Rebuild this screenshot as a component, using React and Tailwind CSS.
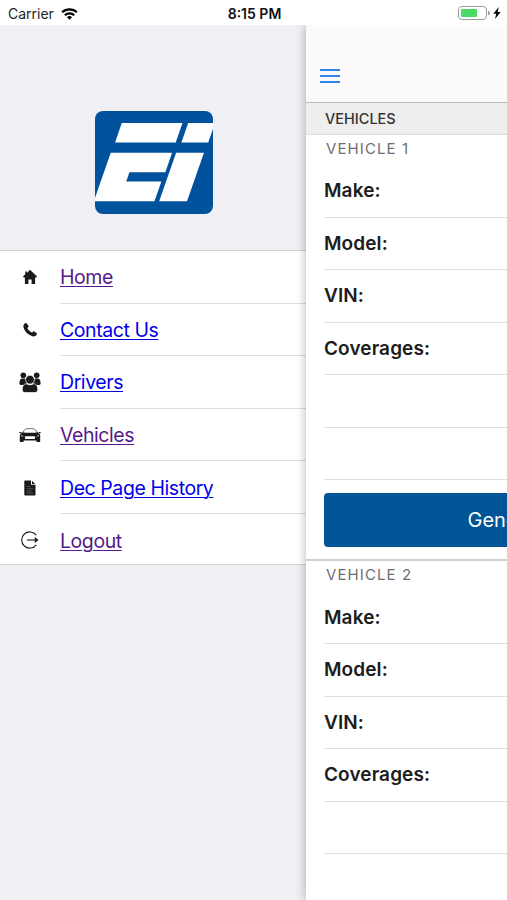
import React from "react";

const HomeIcon = () => (
  <svg viewBox="0 0 16 16" className="w-[16px] h-[16px]" fill="currentColor">
    <path d="M8 .8 15 7.600l-.8 1h-1.100V15H9.600v-4.400H6.400V15H2.900V8.600H1.800L1 7.600 3.300 5.300V2.400h1.600v1.500z" />
  </svg>
);

const PhoneIcon = () => (
  <svg viewBox="0 0 16 16" className="w-[16px] h-[16px]" fill="currentColor">
    <path d="M3.300 1.300c.6-.4 1.100-.2 1.500.3l1.600 2.200c.4.600.3 1.100-.2 1.500l-.9.700c.9 2 2.700 3.800 4.800 4.700l.7-.9c.4-.5.900-.6 1.500-.2l2.200 1.500c.5.400.6.900.3 1.400-.8 1.400-2 2.100-3.700 1.900C6.500 13.500 2.200 9.300 1.400 4.800 1.200 3.200 2 2 3.300 1.300z" />
  </svg>
);

const DriversIcon = () => (
  <svg viewBox="0 0 22 21" className="w-[22px] h-[21px]" fill="currentColor">
    <circle cx="4.300" cy="3.300" r="2.800" />
    <circle cx="17.700" cy="3.300" r="2.800" />
    <path d="M2.500 6.400h3.800l1.700 5.300-2.800 1.300H2c-1.200 0-1.700-.7-1.600-1.900.1-2 .7-4.200 2.100-4.700z" />
    <path d="M19.500 6.400h-3.800L14 11.700l2.800 1.300H20c1.200 0 1.700-.7 1.600-1.900-.1-2-.7-4.200-2.100-4.700z" />
    <path
      d="M7.300 11.700c2.200 1.500 5.200 1.500 7.400 0 2.600.3 4 2.400 4.100 5.300.1 2.300-.9 3.500-2.700 3.500H5.900c-1.800 0-2.800-1.200-2.700-3.500.1-2.900 1.500-5 4.100-5.300z"
      stroke="#fff"
      strokeWidth=".7"
    />
    <circle cx="11" cy="7.700" r="4.400" stroke="#fff" strokeWidth=".7" />
  </svg>
);

const CarIcon = () => (
  <svg viewBox="0 0 22 16" className="w-[22px] h-[16px]" fill="currentColor">
    <path d="M3.500 6.200 5.500 2.900Q6 2 7.200 1.800Q11 1.200 14.800 1.800Q16 2 16.500 2.900L18.500 6.200" fill="none" stroke="#666" strokeWidth=".9" />
    <path
      fillRule="evenodd"
      d="M3.500 5.300C6 6 16 6 18.500 5.300l1.800 1.500c.7.600.9 1.300.9 2.200v5.200c0 .6-.3.900-.9.900h-2c-.6 0-.9-.3-.9-.9v-.6H4.600v.6c0 .6-.3.900-.9.900h-2c-.6 0-.9-.3-.9-.9V9c0-.9.200-1.600.9-2.200zM6.500 9.300c-.5 0-.7.300-.7.700l.3 1.500c.1.400.4.600.8.600h8.200c.4 0 .7-.2.800-.6l.3-1.500c0-.4-.2-.7-.7-.7zM2 8.300l.2.900 2.200.3c-.2-.7-1-1.100-2.400-1.200zM20 8.300l-.2.900-2.200.3c.2-.7 1-1.100 2.400-1.200z"
    />
    <path d="M.4 5h2v1.200h-2zM19.600 5h2v1.200h-2z" />
  </svg>
);

const DocumentIcon = () => (
  <svg viewBox="0 0 12 16" className="w-[12px] h-[16px]" fill="currentColor">
    <path d="M1 .5h6v4.300h4.500V14.500c0 .6-.4 1-1 1H1.200c-.6 0-.9-.4-.9-1V1.300c0-.5.300-.8.700-.8z" />
    <path d="M8 .8 11.200 4H8z" />
    <path d="M2.500 6.500h4M2.500 8.700h6.500M2.500 10.900h5M2.500 13h6.500" stroke="#777" strokeWidth=".6" />
  </svg>
);

const LogoutIcon = () => (
  <svg viewBox="0 0 20 20" className="w-[20px] h-[20px]" fill="none" stroke="currentColor" strokeWidth="1.100">
    <path d="M16.300 5.200a8.100 8.100 0 1 0 0 9.600" />
    <path d="M7 10h9.500" />
    <path d="M14.800 6.900 18.600 10l-3.800 3.100z" fill="currentColor" stroke="none" />
  </svg>
);

const menuItems = [
  { title: "Home", icon: <HomeIcon />, color: "text-[#551a8b]" },
  { title: "Contact Us", icon: <PhoneIcon />, color: "text-[#0000ee]" },
  { title: "Drivers", icon: <DriversIcon />, color: "text-[#0000ee]" },
  { title: "Vehicles", icon: <CarIcon />, color: "text-[#551a8b]" },
  { title: "Dec Page History", icon: <DocumentIcon />, color: "text-[#0000ee]" },
  { title: "Logout", icon: <LogoutIcon />, color: "text-[#551a8b]" },
];

const vehicles = ["Vehicle 1", "Vehicle 2"];
const fields = ["Make:", "Model:", "VIN:", "Coverages:", "", ""];

const StatusBar = () => (
  <header className="h-[25px] shrink-0 grid grid-cols-[1fr_auto_1fr] items-center bg-white pl-2 pr-[6px] pt-[2px] text-black">
    <div className="flex items-center gap-[7px]">
      <span className="text-[14px] text-[#222]">Carrier</span>
      <svg viewBox="0 0 18 13" className="w-[17px] h-[12px]" fill="none" stroke="currentColor" strokeWidth="2.300">
        <path d="M1 4.700a11.500 11.500 0 0 1 16 0" />
        <path d="M3.900 7.900a7.300 7.300 0 0 1 10.200 0" />
        <path d="M9 12.800 6.300 10a3.900 3.900 0 0 1 5.400 0z" fill="currentColor" stroke="none" />
      </svg>
    </div>
    <span className="text-[14px] font-semibold text-[#111]">8:15 PM</span>
    <div className="flex items-center justify-end pb-px">
      <div className="w-[29px] h-[14px] rounded-[4px] border border-[#9b9b9b] p-[2px]">
        <div className="w-[16px] h-full rounded-[1px] bg-[#4cd964]"></div>
      </div>
      <div className="w-[2px] h-[4px] ml-px rounded-r bg-[#9b9b9b]"></div>
      <svg viewBox="0 0 8 12" className="w-[8px] h-[12px] ml-[3px]" fill="currentColor">
        <path d="M5.800 0 .3 6.800h3L2 12l5.700-7H4.600z" />
      </svg>
    </div>
  </header>
);

const Logo = () => (
  <svg viewBox="0 0 352 308" className="w-[118px] h-[103px] rounded-[8px] bg-[#00529c]" preserveAspectRatio="none">
    <g transform="skewX(-19.200)" fill="#fff">
      <rect x="92.500" y="36" width="181" height="58" />
      <rect x="290.500" y="36" width="80" height="58" />
      <rect x="90.500" y="125" width="183" height="58" />
      <rect x="90.500" y="182" width="76" height="30" />
      <rect x="90.500" y="211" width="181" height="59" />
      <rect x="285.500" y="125" width="83" height="145" />
    </g>
  </svg>
);

const SideMenu = () => (
  <aside className="w-[306px] shrink-0 bg-[#efeff4]">
    <div className="h-[225px] pt-[86px] pl-[95px]">
      <Logo />
    </div>
    <nav className="h-[315px] border-y border-[#d3d3d6] bg-white">
      {menuItems.map((item, index) => (
        <div key={item.title} className="flex h-[52.6px] items-center">
          <div className="flex w-[60px] shrink-0 justify-center text-[#1a1a1a]">{item.icon}</div>
          <div className={`flex h-full flex-1 items-center pt-[2px] ${index < menuItems.length - 1 ? "border-b border-[#dedede]" : ""}`}>
            <a className={`text-[19.5px] tracking-[-0.43px] underline decoration-1 underline-offset-[2px] ${item.color}`}>
              {item.title}
            </a>
          </div>
        </div>
      ))}
    </nav>
  </aside>
);

const VehicleCard = ({ title }) => (
  <section className="h-[426.5px] shrink-0 bg-white">
    <h2 className="h-[30px] pt-[3.5px] pl-[20px] text-[15px] leading-[20px] tracking-[1.1px] uppercase text-[#6f6f6f]">
      {title}
    </h2>
    <div className="pl-[18px]">
      {fields.map((field, index) => (
        <div
          key={index}
          className="flex h-[52.5px] items-center border-b border-[#dedede] pt-px text-[19px] tracking-[0.1px] font-semibold text-[#1c1c1c]"
        >
          {field}
        </div>
      ))}
      <button className="mt-[13px] block h-[54px] w-[470px] rounded-[4px] bg-[#005596] pl-[143.5px] text-left text-[20px] text-white whitespace-nowrap">
        Generate ID Card
      </button>
    </div>
    <div className="mt-[12px] h-[2px] bg-[#cfcfcf]"></div>
  </section>
);

const App = () => {
  return (
    <div className="flex h-[900px] w-[507px] flex-col overflow-hidden bg-white font-['Inter',sans-serif]">
      <StatusBar />
      <div className="flex min-h-0 flex-1 overflow-hidden">
        <SideMenu />
        <main className="relative flex flex-1 flex-col overflow-hidden bg-white [clip-path:inset(0_0_0_-20px)] shadow-[0_0_10px_rgba(0,0,0,0.3)]">
          <div className="flex h-[78px] shrink-0 flex-col border-b border-[#b9b9b9] bg-[#fafafa] pt-[44px] pl-[14px]">
            <div className="flex w-[20px] flex-col gap-[4px]">
              <span className="h-[2px] bg-[#2f86e8]"></span>
              <span className="h-[2px] bg-[#2f86e8]"></span>
              <span className="h-[2px] bg-[#2f86e8]"></span>
            </div>
          </div>
          <h1 className="flex h-[32px] shrink-0 items-center border-b border-[#dcdcdc] bg-[#eeeeee] pt-px pl-[19px] text-[14.500px] font-medium uppercase text-[#333]">
            Vehicles
          </h1>
          {vehicles.map((vehicle) => (
            <VehicleCard key={vehicle} title={vehicle} />
          ))}
        </main>
      </div>
    </div>
  );
};

export default App;
